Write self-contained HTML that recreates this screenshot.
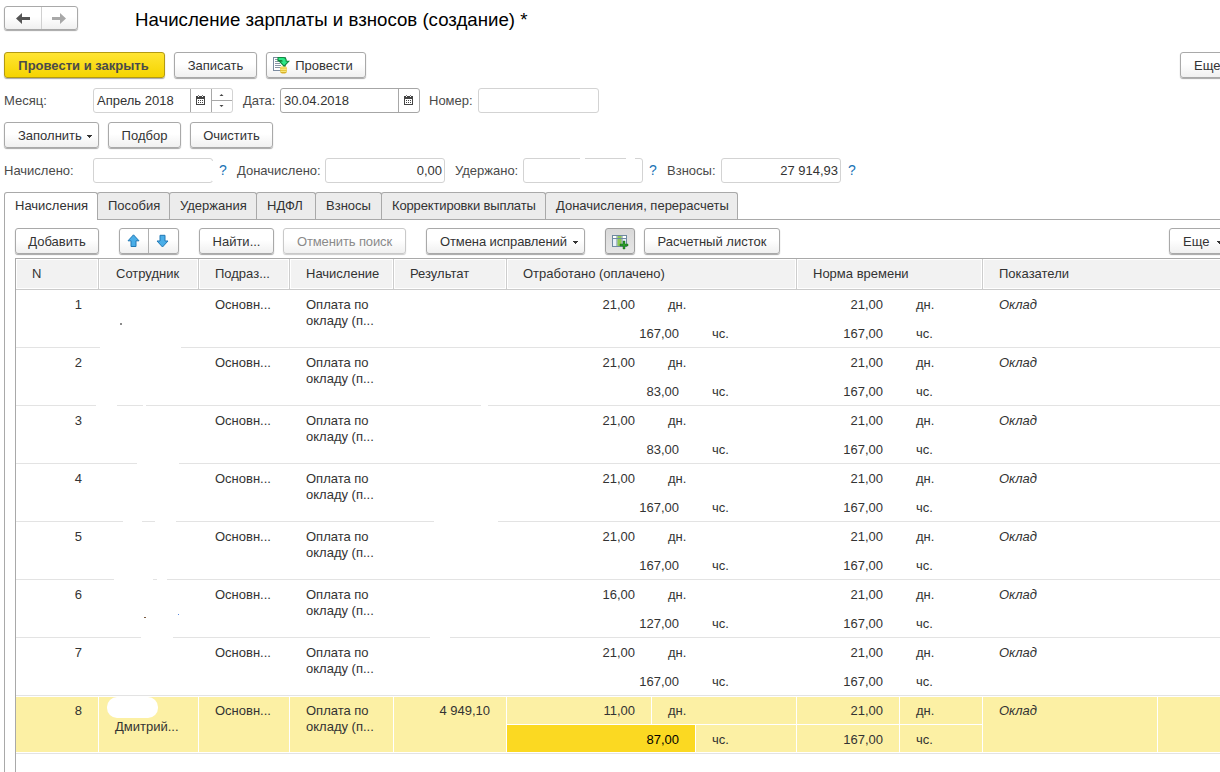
<!DOCTYPE html>
<html><head><meta charset="utf-8">
<style>
*{box-sizing:border-box;margin:0;padding:0}
html,body{width:1220px;height:772px;overflow:hidden;background:#fff}
body{position:relative;font-family:"Liberation Sans",sans-serif;font-size:13px;color:#333}
.a{position:absolute;white-space:nowrap}
.t{position:absolute;white-space:nowrap;line-height:16px;height:16px}
.btn{position:absolute;height:26px;border:1px solid #a9a9a9;border-radius:3px;
 background:linear-gradient(#fff 0,#fff 45%,#f0f0f0 100%);box-shadow:0 1px 1px rgba(0,0,0,.35);
 line-height:23px;padding-top:1px;text-align:center;color:#333;white-space:nowrap}
.inp{position:absolute;height:25px;border:1px solid #d3d3d3;border-radius:3px;background:#fff}
.lbl{position:absolute;white-space:nowrap;line-height:16px;color:#4a4a4a}
.q{position:absolute;color:#1a73b5;line-height:16px;font-size:14px}
.tab{position:absolute;top:192px;height:27px;border:1px solid #a9a9a9;border-bottom:none;border-radius:3px 3px 0 0;background:#ececec;line-height:26px;padding-left:10px;white-space:nowrap}
.hd{position:absolute;top:259px;height:30px;background:#f0f0f0;border-left:1px solid #fff;border-top:1px solid #fff;line-height:28px;padding-left:16px;white-space:nowrap}
.vl{position:absolute;width:1px;background:#d4d4d4}
.hl{position:absolute;height:1px;background:#e0e0e0}
.r{text-align:right}
</style></head><body>

<!-- nav -->
<div class="btn" style="left:4px;top:6px;width:74px;height:24px"></div>
<div class="a" style="left:41px;top:7px;width:1px;height:22px;background:#d0d0d0"></div>
<svg class="a" style="left:15px;top:12px" width="16" height="14" viewBox="0 0 16 14"><path d="M1 6.5 L7 1 L7 5 L15 5 L15 8 L7 8 L7 12 Z" fill="#555"/></svg>
<svg class="a" style="left:51px;top:12px" width="16" height="14" viewBox="0 0 16 14"><path d="M15 6.5 L9 1 L9 5 L1 5 L1 8 L9 8 L9 12 Z" fill="#a8a8a8"/></svg>

<div class="a" style="left:135px;top:9px;font-size:18.67px;line-height:22px;color:#000">Начисление зарплаты и взносов (создание) *</div>

<!-- main command bar -->
<div class="btn" style="left:4px;top:52px;width:161px;border-color:#b39a12;background:linear-gradient(#ffe533,#f5d400);font-weight:bold;color:#4a4a4a;padding-right:2px">Провести и закрыть</div>
<div class="btn" style="left:174px;top:52px;width:83px">Записать</div>
<div class="btn" style="left:266px;top:52px;width:100px;padding-left:16px">Провести</div>
<svg class="a" style="left:272px;top:56px" width="18" height="18" viewBox="0 0 18 18">
<rect x="1.5" y="1.5" width="12" height="13" fill="#fff" stroke="#7b8ba0" stroke-width="1"/>
<g fill="#8a96a6"><rect x="3" y="3" width="4" height="1"/><rect x="3" y="5" width="5" height="1"/><rect x="3" y="7" width="5" height="1"/><rect x="3" y="9" width="6" height="1"/><rect x="3" y="11" width="6" height="1"/></g>
<ellipse cx="11.5" cy="15.5" rx="3.3" ry="2" fill="#d9b22a"/>
<rect x="8.2" y="11.5" width="6.6" height="4" fill="#e8c53a"/>
<ellipse cx="11.5" cy="11.5" rx="3.3" ry="1.3" fill="#f3dc62"/>
<rect x="8.5" y="13" width="6" height="0.8" fill="#fbf08a"/><rect x="8.5" y="15" width="6" height="0.8" fill="#fbf08a"/>
<path d="M6 1.5 H11 Q14.2 1.5 14.2 4.7 V5.2 H16.8 L12.1 10.2 L7.4 5.2 H10 Q10 4.6 9.4 4.6 H6 Z" fill="#2ee888" stroke="#108a3c" stroke-width="1.1" stroke-linejoin="miter"/>
</svg>
<div class="btn" style="left:1180px;top:52px;width:60px;text-align:left;padding-left:13px">Еще</div>

<!-- month row -->
<div class="lbl" style="left:4px;top:93px">Месяц:</div>
<div class="inp" style="left:93px;top:88px;width:140px"></div>
<div class="t" style="left:97px;top:93px">Апрель 2018</div>
<div class="a" style="left:190px;top:89px;width:1px;height:23px;background:#a8a8a8"></div>
<div class="a" style="left:211px;top:89px;width:1px;height:23px;background:#a8a8a8"></div>
<div class="a" style="left:212px;top:100px;width:20px;height:1px;background:#a8a8a8"></div>
<svg class="a" style="left:196px;top:95px" width="9" height="11" viewBox="0 0 9 11" shape-rendering="crispEdges"><rect x="0" y="1" width="9" height="9" fill="#444"/><rect x="1" y="4" width="7" height="5" fill="#fff"/><rect x="2" y="0" width="1" height="1" fill="#777"/><rect x="6" y="0" width="1" height="1" fill="#777"/><rect x="2" y="1" width="1" height="1" fill="#fff"/><rect x="6" y="1" width="1" height="1" fill="#fff"/><g fill="#444"><rect x="2" y="5" width="1" height="1"/><rect x="4" y="5" width="1" height="1"/><rect x="6" y="5" width="1" height="1"/><rect x="2" y="7" width="1" height="1"/><rect x="4" y="7" width="1" height="1"/><rect x="6" y="7" width="1" height="1"/></g></svg>
<svg class="a" style="left:219px;top:93px" width="6" height="16" viewBox="0 0 6 16"><path d="M0.5 3h4L2.5 1z" fill="#444"/><path d="M0.5 12h4L2.5 14z" fill="#444"/></svg>
<div class="lbl" style="left:243px;top:93px">Дата:</div>
<div class="inp" style="left:280px;top:88px;width:140px;border-color:#a6a6a6"></div>
<div class="t" style="left:284px;top:93px">30.04.2018</div>
<div class="a" style="left:398px;top:89px;width:1px;height:23px;background:#a8a8a8"></div>
<svg class="a" style="left:404px;top:95px" width="9" height="11" viewBox="0 0 9 11" shape-rendering="crispEdges"><rect x="0" y="1" width="9" height="9" fill="#444"/><rect x="1" y="4" width="7" height="5" fill="#fff"/><rect x="2" y="0" width="1" height="1" fill="#777"/><rect x="6" y="0" width="1" height="1" fill="#777"/><rect x="2" y="1" width="1" height="1" fill="#fff"/><rect x="6" y="1" width="1" height="1" fill="#fff"/><g fill="#444"><rect x="2" y="5" width="1" height="1"/><rect x="4" y="5" width="1" height="1"/><rect x="6" y="5" width="1" height="1"/><rect x="2" y="7" width="1" height="1"/><rect x="4" y="7" width="1" height="1"/><rect x="6" y="7" width="1" height="1"/></g></svg>
<div class="lbl" style="left:429px;top:93px">Номер:</div>
<div class="inp" style="left:478px;top:88px;width:121px"></div>

<!-- fill row -->
<div class="btn" style="left:4px;top:122px;width:95px;text-align:left;padding-left:13px">Заполнить</div>
<svg class="a" style="left:87px;top:135px" width="5" height="3" viewBox="0 0 5 3" shape-rendering="crispEdges"><rect x="0" y="0" width="5" height="1" fill="#333"/><rect x="1" y="1" width="3" height="1" fill="#333"/><rect x="2" y="2" width="1" height="1" fill="#333"/></svg>
<div class="btn" style="left:108px;top:122px;width:73px">Подбор</div>
<div class="btn" style="left:190px;top:122px;width:83px">Очистить</div>

<!-- totals row -->
<div class="lbl" style="left:4px;top:163px">Начислено:</div>
<div class="inp" style="left:93px;top:158px;width:120px"></div>
<div class="a" style="left:212px;top:161px;width:1px;height:20px;background:#fff"></div>
<div class="q" style="left:219px;top:162px">?</div>
<div class="lbl" style="left:237px;top:163px">Доначислено:</div>
<div class="inp" style="left:325px;top:158px;width:120px"></div>
<div class="t r" style="left:325px;top:163px;width:117px">0,00</div>
<div class="lbl" style="left:455px;top:163px">Удержано:</div>
<div class="inp" style="left:523px;top:158px;width:120px"></div>
<div class="a" style="left:580px;top:158px;width:5px;height:1px;background:#fff"></div>
<div class="a" style="left:626px;top:158px;width:9px;height:1px;background:#fff"></div>
<div class="q" style="left:649px;top:162px">?</div>
<div class="lbl" style="left:667px;top:163px">Взносы:</div>
<div class="inp" style="left:721px;top:158px;width:120px"></div>
<div class="t r" style="left:721px;top:163px;width:117px">27 914,93</div>
<div class="q" style="left:848px;top:162px">?</div>

<!-- tabs -->
<div class="a" style="left:4px;top:219px;width:1216px;height:1px;background:#a9a9a9"></div>
<div class="a" style="left:4px;top:219px;width:1px;height:553px;background:#a9a9a9"></div>
<div class="tab" style="left:97px;width:73px">Пособия</div>
<div class="tab" style="left:169px;width:88px">Удержания</div>
<div class="tab" style="left:256px;width:60px">НДФЛ</div>
<div class="tab" style="left:315px;width:67px">Взносы</div>
<div class="tab" style="left:381px;width:165px;letter-spacing:-0.14px">Корректировки выплаты</div>
<div class="tab" style="left:545px;width:193px">Доначисления, перерасчеты</div>
<div class="tab" style="left:4px;width:94px;height:28px;background:#fff">Начисления</div>

<!-- table toolbar -->
<div class="btn" style="left:15px;top:228px;width:84px">Добавить</div>
<div class="btn" style="left:119px;top:228px;width:60px"></div>
<div class="a" style="left:148px;top:229px;width:1px;height:24px;background:#b0b0b0"></div>
<svg class="a" style="left:127px;top:234px" width="13" height="14" viewBox="0 0 13 14"><path d="M6.5 0.8 L12 6.8 L9 6.8 L9 12.5 L4 12.5 L4 6.8 L1 6.8 Z" fill="#4aaee8" stroke="#2279b5" stroke-width="1" stroke-linejoin="miter"/></svg>
<svg class="a" style="left:156px;top:234px" width="13" height="14" viewBox="0 0 13 14"><path d="M6.5 13 L12 7 L9 7 L9 1.3 L4 1.3 L4 7 L1 7 Z" fill="#4aaee8" stroke="#2279b5" stroke-width="1" stroke-linejoin="miter"/></svg>
<div class="btn" style="left:199px;top:228px;width:75px">Найти...</div>
<div class="btn" style="left:283px;top:228px;width:123px;color:#8a8a8a;border-color:#c9c9c9;box-shadow:0 1px 1px rgba(0,0,0,.2);letter-spacing:-0.12px">Отменить поиск</div>
<div class="btn" style="left:426px;top:228px;width:159px;text-align:left;padding-left:13px;letter-spacing:-0.1px">Отмена исправлений</div>
<svg class="a" style="left:573px;top:241px" width="5" height="3" viewBox="0 0 5 3" shape-rendering="crispEdges"><rect x="0" y="0" width="5" height="1" fill="#333"/><rect x="1" y="1" width="3" height="1" fill="#333"/><rect x="2" y="2" width="1" height="1" fill="#333"/></svg>
<div class="btn" style="left:605px;top:228px;width:30px;background:linear-gradient(#d9d9d9,#e6e6e6);border-color:#a0a0a0"></div>
<svg class="a" style="left:611px;top:234px" width="18" height="16" viewBox="0 0 18 16">
<rect x="1.5" y="1.5" width="14" height="11" fill="#e8f0f8" stroke="#6e8aa0" stroke-width="1"/>
<rect x="2" y="2" width="13" height="2" fill="#fff"/>
<rect x="5.5" y="2" width="1" height="10" fill="#6e8aa0"/><rect x="10.5" y="2" width="1" height="10" fill="#6e8aa0"/>
<rect x="6.5" y="2" width="4" height="10" fill="#8cc850"/>
<rect x="2" y="4" width="13" height="1" fill="#6e8aa0"/>
<path d="M9 10h3v-3h2v3h3v2h-3v3h-2v-3h-3z" fill="#2a9a2a" stroke="#0b5e0b" stroke-width="0.4"/>
</svg>
<div class="btn" style="left:644px;top:228px;width:136px">Расчетный листок</div>
<div class="btn" style="left:1169px;top:228px;width:70px;text-align:left;padding-left:13px">Еще</div>
<svg class="a" style="left:1217px;top:241px" width="5" height="3" viewBox="0 0 5 3" shape-rendering="crispEdges"><rect x="0" y="0" width="5" height="1" fill="#333"/><rect x="1" y="1" width="3" height="1" fill="#333"/><rect x="2" y="2" width="1" height="1" fill="#333"/></svg>

<!-- table -->
<div class="a" style="left:15px;top:258px;width:1205px;height:1px;background:#a9a9a9"></div>
<div class="a" style="left:15px;top:258px;width:1px;height:514px;background:#a9a9a9"></div>
<!--TBL-->
<div class="a" style="left:16px;top:259px;width:1204px;height:30px;background:#fff"></div>
<div class="a" style="left:17px;top:260px;width:80px;height:28px;background:#f2f2f2"></div>
<div class="a" style="left:100px;top:260px;width:97px;height:28px;background:#f2f2f2"></div>
<div class="a" style="left:200px;top:260px;width:88px;height:28px;background:#f2f2f2"></div>
<div class="a" style="left:291px;top:260px;width:101px;height:28px;background:#f2f2f2"></div>
<div class="a" style="left:395px;top:260px;width:110px;height:28px;background:#f2f2f2"></div>
<div class="a" style="left:508px;top:260px;width:287px;height:28px;background:#f2f2f2"></div>
<div class="a" style="left:798px;top:260px;width:183px;height:28px;background:#f2f2f2"></div>
<div class="a" style="left:984px;top:260px;width:255px;height:28px;background:#f2f2f2"></div>
<div class="a" style="left:98px;top:259px;width:1px;height:30px;background:#cdcdcd"></div>
<div class="a" style="left:198px;top:259px;width:1px;height:30px;background:#cdcdcd"></div>
<div class="a" style="left:289px;top:259px;width:1px;height:30px;background:#cdcdcd"></div>
<div class="a" style="left:393px;top:259px;width:1px;height:30px;background:#cdcdcd"></div>
<div class="a" style="left:506px;top:259px;width:1px;height:30px;background:#cdcdcd"></div>
<div class="a" style="left:796px;top:259px;width:1px;height:30px;background:#cdcdcd"></div>
<div class="a" style="left:982px;top:259px;width:1px;height:30px;background:#cdcdcd"></div>
<div class="a" style="left:16px;top:289px;width:1204px;height:1px;background:#cbcbcb"></div>
<div class="t" style="left:32px;top:266px">N</div>
<div class="t" style="left:116px;top:266px">Сотрудник</div>
<div class="t" style="left:215px;top:266px">Подраз...</div>
<div class="t" style="left:306px;top:266px">Начисление</div>
<div class="t" style="left:410px;top:266px">Результат</div>
<div class="t" style="left:523px;top:266px">Отработано (оплачено)</div>
<div class="t" style="left:813px;top:266px">Норма времени</div>
<div class="t" style="left:999px;top:266px">Показатели</div>
<div class="a" style="left:16px;top:347px;width:1204px;height:1px;background:#e3e3e3"></div>
<div class="t r" style="left:-18px;top:297px;width:100px">1</div>
<div class="t" style="left:215px;top:297px">Основн...</div>
<div class="t" style="left:306px;top:297px">Оплата по</div>
<div class="t" style="left:306px;top:313px">окладу (п...</div>
<div class="t r" style="left:535px;top:297px;width:100px">21,00</div>
<div class="t" style="left:668px;top:297px">дн.</div>
<div class="t r" style="left:579px;top:326px;width:100px">167,00</div>
<div class="t" style="left:712px;top:326px">чс.</div>
<div class="t r" style="left:783px;top:297px;width:100px">21,00</div>
<div class="t" style="left:916px;top:297px">дн.</div>
<div class="t r" style="left:783px;top:326px;width:100px">167,00</div>
<div class="t" style="left:916px;top:326px">чс.</div>
<div class="t" style="left:999px;top:297px;font-style:italic">Оклад</div>
<div class="a" style="left:16px;top:405px;width:1204px;height:1px;background:#e3e3e3"></div>
<div class="t r" style="left:-18px;top:355px;width:100px">2</div>
<div class="t" style="left:215px;top:355px">Основн...</div>
<div class="t" style="left:306px;top:355px">Оплата по</div>
<div class="t" style="left:306px;top:371px">окладу (п...</div>
<div class="t r" style="left:535px;top:355px;width:100px">21,00</div>
<div class="t" style="left:668px;top:355px">дн.</div>
<div class="t r" style="left:579px;top:384px;width:100px">83,00</div>
<div class="t" style="left:712px;top:384px">чс.</div>
<div class="t r" style="left:783px;top:355px;width:100px">21,00</div>
<div class="t" style="left:916px;top:355px">дн.</div>
<div class="t r" style="left:783px;top:384px;width:100px">167,00</div>
<div class="t" style="left:916px;top:384px">чс.</div>
<div class="t" style="left:999px;top:355px;font-style:italic">Оклад</div>
<div class="a" style="left:16px;top:463px;width:1204px;height:1px;background:#e3e3e3"></div>
<div class="t r" style="left:-18px;top:413px;width:100px">3</div>
<div class="t" style="left:215px;top:413px">Основн...</div>
<div class="t" style="left:306px;top:413px">Оплата по</div>
<div class="t" style="left:306px;top:429px">окладу (п...</div>
<div class="t r" style="left:535px;top:413px;width:100px">21,00</div>
<div class="t" style="left:668px;top:413px">дн.</div>
<div class="t r" style="left:579px;top:442px;width:100px">83,00</div>
<div class="t" style="left:712px;top:442px">чс.</div>
<div class="t r" style="left:783px;top:413px;width:100px">21,00</div>
<div class="t" style="left:916px;top:413px">дн.</div>
<div class="t r" style="left:783px;top:442px;width:100px">167,00</div>
<div class="t" style="left:916px;top:442px">чс.</div>
<div class="t" style="left:999px;top:413px;font-style:italic">Оклад</div>
<div class="a" style="left:16px;top:521px;width:1204px;height:1px;background:#e3e3e3"></div>
<div class="t r" style="left:-18px;top:471px;width:100px">4</div>
<div class="t" style="left:215px;top:471px">Основн...</div>
<div class="t" style="left:306px;top:471px">Оплата по</div>
<div class="t" style="left:306px;top:487px">окладу (п...</div>
<div class="t r" style="left:535px;top:471px;width:100px">21,00</div>
<div class="t" style="left:668px;top:471px">дн.</div>
<div class="t r" style="left:579px;top:500px;width:100px">167,00</div>
<div class="t" style="left:712px;top:500px">чс.</div>
<div class="t r" style="left:783px;top:471px;width:100px">21,00</div>
<div class="t" style="left:916px;top:471px">дн.</div>
<div class="t r" style="left:783px;top:500px;width:100px">167,00</div>
<div class="t" style="left:916px;top:500px">чс.</div>
<div class="t" style="left:999px;top:471px;font-style:italic">Оклад</div>
<div class="a" style="left:16px;top:579px;width:1204px;height:1px;background:#e3e3e3"></div>
<div class="t r" style="left:-18px;top:529px;width:100px">5</div>
<div class="t" style="left:215px;top:529px">Основн...</div>
<div class="t" style="left:306px;top:529px">Оплата по</div>
<div class="t" style="left:306px;top:545px">окладу (п...</div>
<div class="t r" style="left:535px;top:529px;width:100px">21,00</div>
<div class="t" style="left:668px;top:529px">дн.</div>
<div class="t r" style="left:579px;top:558px;width:100px">167,00</div>
<div class="t" style="left:712px;top:558px">чс.</div>
<div class="t r" style="left:783px;top:529px;width:100px">21,00</div>
<div class="t" style="left:916px;top:529px">дн.</div>
<div class="t r" style="left:783px;top:558px;width:100px">167,00</div>
<div class="t" style="left:916px;top:558px">чс.</div>
<div class="t" style="left:999px;top:529px;font-style:italic">Оклад</div>
<div class="a" style="left:16px;top:637px;width:1204px;height:1px;background:#e3e3e3"></div>
<div class="t r" style="left:-18px;top:587px;width:100px">6</div>
<div class="t" style="left:215px;top:587px">Основн...</div>
<div class="t" style="left:306px;top:587px">Оплата по</div>
<div class="t" style="left:306px;top:603px">окладу (п...</div>
<div class="t r" style="left:535px;top:587px;width:100px">16,00</div>
<div class="t" style="left:668px;top:587px">дн.</div>
<div class="t r" style="left:579px;top:616px;width:100px">127,00</div>
<div class="t" style="left:712px;top:616px">чс.</div>
<div class="t r" style="left:783px;top:587px;width:100px">21,00</div>
<div class="t" style="left:916px;top:587px">дн.</div>
<div class="t r" style="left:783px;top:616px;width:100px">167,00</div>
<div class="t" style="left:916px;top:616px">чс.</div>
<div class="t" style="left:999px;top:587px;font-style:italic">Оклад</div>
<div class="a" style="left:16px;top:695px;width:1204px;height:1px;background:#e3e3e3"></div>
<div class="t r" style="left:-18px;top:645px;width:100px">7</div>
<div class="t" style="left:215px;top:645px">Основн...</div>
<div class="t" style="left:306px;top:645px">Оплата по</div>
<div class="t" style="left:306px;top:661px">окладу (п...</div>
<div class="t r" style="left:535px;top:645px;width:100px">21,00</div>
<div class="t" style="left:668px;top:645px">дн.</div>
<div class="t r" style="left:579px;top:674px;width:100px">167,00</div>
<div class="t" style="left:712px;top:674px">чс.</div>
<div class="t r" style="left:783px;top:645px;width:100px">21,00</div>
<div class="t" style="left:916px;top:645px">дн.</div>
<div class="t r" style="left:783px;top:674px;width:100px">167,00</div>
<div class="t" style="left:916px;top:674px">чс.</div>
<div class="t" style="left:999px;top:645px;font-style:italic">Оклад</div>
<div class="a" style="left:16px;top:696px;width:1204px;height:56px;background:#fff"></div>
<div class="a" style="left:16px;top:697px;width:82px;height:55px;background:#fcf0a4"></div>
<div class="a" style="left:99px;top:697px;width:99px;height:55px;background:#fcf0a4"></div>
<div class="a" style="left:199px;top:697px;width:90px;height:55px;background:#fcf0a4"></div>
<div class="a" style="left:290px;top:697px;width:103px;height:55px;background:#fcf0a4"></div>
<div class="a" style="left:394px;top:697px;width:112px;height:55px;background:#fcf0a4"></div>
<div class="a" style="left:1158px;top:697px;width:82px;height:55px;background:#fcf0a4"></div>
<div class="a" style="left:507px;top:697px;width:144px;height:27px;background:#fcf0a4"></div>
<div class="a" style="left:652px;top:697px;width:144px;height:27px;background:#fcf0a4"></div>
<div class="a" style="left:507px;top:725px;width:188px;height:27px;background:#fbd922"></div>
<div class="a" style="left:696px;top:725px;width:100px;height:27px;background:#fcf0a4"></div>
<div class="a" style="left:797px;top:697px;width:102px;height:27px;background:#fcf0a4"></div>
<div class="a" style="left:900px;top:697px;width:82px;height:27px;background:#fcf0a4"></div>
<div class="a" style="left:797px;top:725px;width:102px;height:27px;background:#fcf0a4"></div>
<div class="a" style="left:900px;top:725px;width:82px;height:27px;background:#fcf0a4"></div>
<div class="a" style="left:983px;top:697px;width:174px;height:55px;background:#fcf0a4"></div>
<div class="a" style="left:16px;top:753px;width:1204px;height:1px;background:#e0e0e0"></div>
<div class="a" style="left:107px;top:697px;width:51px;height:21px;border-radius:10px;background:#fff"></div>
<div class="t" style="left:115px;top:719px">Дмитрий...</div>
<div class="t r" style="left:390px;top:703px;width:100px">4 949,10</div>
<div class="a" style="left:16px;top:753px;width:1204px;height:1px;background:#e3e3e3"></div>
<div class="t r" style="left:-18px;top:703px;width:100px">8</div>
<div class="t" style="left:215px;top:703px">Основн...</div>
<div class="t" style="left:306px;top:703px">Оплата по</div>
<div class="t" style="left:306px;top:719px">окладу (п...</div>
<div class="t r" style="left:535px;top:703px;width:100px">11,00</div>
<div class="t" style="left:668px;top:703px">дн.</div>
<div class="t r" style="left:579px;top:732px;width:100px;color:#000">87,00</div>
<div class="t" style="left:712px;top:732px">чс.</div>
<div class="t r" style="left:783px;top:703px;width:100px">21,00</div>
<div class="t" style="left:916px;top:703px">дн.</div>
<div class="t r" style="left:783px;top:732px;width:100px">167,00</div>
<div class="t" style="left:916px;top:732px">чс.</div>
<div class="t" style="left:999px;top:703px;font-style:italic">Оклад</div>
<div class="a" style="left:100px;top:347px;width:81px;height:1px;background:#fff"></div>
<div class="a" style="left:96px;top:405px;width:21px;height:1px;background:#fff"></div>
<div class="a" style="left:143px;top:405px;width:3px;height:1px;background:#fff"></div>
<div class="a" style="left:481px;top:405px;width:7px;height:1px;background:#fff"></div>
<div class="a" style="left:137px;top:463px;width:42px;height:1px;background:#fff"></div>
<div class="a" style="left:123px;top:521px;width:19px;height:1px;background:#fff"></div>
<div class="a" style="left:155px;top:521px;width:21px;height:1px;background:#fff"></div>
<div class="a" style="left:434px;top:521px;width:64px;height:1px;background:#fff"></div>
<div class="a" style="left:114px;top:579px;width:39px;height:1px;background:#fff"></div>
<div class="a" style="left:157px;top:579px;width:10px;height:1px;background:#fff"></div>
<div class="a" style="left:141px;top:637px;width:32px;height:1px;background:#fff"></div>
<div class="a" style="left:430px;top:637px;width:20px;height:1px;background:#fff"></div>
<div class="a" style="left:120px;top:323px;width:2px;height:2px;background:#666;border-radius:1px"></div>
<div class="a" style="left:144px;top:617px;width:2px;height:1px;background:#7a5a40"></div>
<div class="a" style="left:178px;top:614px;width:1px;height:1px;background:#5a8ae0"></div>
<!--/TBL-->
</body></html>
